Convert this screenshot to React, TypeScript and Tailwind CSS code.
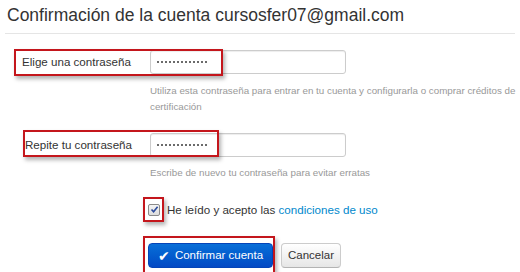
const dots = Array.from({ length: 13 })

function PasswordField() {
  return (
    <div className="flex h-[24px] w-[196px] items-center gap-[2px] rounded-[3px] border border-[#cccccc] bg-white pl-[6px] shadow-[inset_0_1px_1px_rgba(0,0,0,0.075)]">
      {dots.map((_, i) => (
        <span key={i} className="h-[2px] w-[2px] rounded-full bg-[#3a3a3a]" />
      ))}
    </div>
  )
}

// hand-drawn red highlight boxes that sit over the form
function Mark({ className }: { className: string }) {
  return (
    <div
      className={
        'pointer-events-none absolute border-2 border-[#c4161c] shadow-[2px_3px_4px_rgba(0,0,0,0.3)] ' +
        className
      }
    />
  )
}

export default function App() {
  return (
    <div className="relative h-[272px] w-[520px] overflow-hidden bg-white font-['Liberation_Sans',Arial,sans-serif] text-[#333]">
      <h1 className="pl-[7px] pt-[5px] text-[17.5px] font-normal leading-[20px] text-[#333]">
        Confirmación de la cuenta cursosfer07@gmail.com
      </h1>
      <div className="mx-[5px] mt-[8px] h-px bg-[#e5e5e5]" />

      {/* Password */}
      <div className="mt-[16px] flex items-center">
        <label className="w-[150px] pl-[22px] text-[11.6px] text-[#333]">Elige una contraseña</label>
        <PasswordField />
      </div>
      <p className="ml-[150px] mt-[9px] w-[368px] text-[9.8px] leading-[16px] text-[#999]">
        Utiliza esta contraseña para entrar en tu cuenta y configurarla o comprar créditos de certificación
      </p>

      {/* Repeat */}
      <div className="mt-[18px] flex items-center">
        <label className="w-[150px] pl-[25px] text-[11.6px] text-[#333]">Repite tu contraseña</label>
        <PasswordField />
      </div>
      <p className="ml-[150px] mt-[8px] text-[9.8px] leading-[16px] text-[#999]">
        Escribe de nuevo tu contraseña para evitar erratas
      </p>

      {/* Terms */}
      <div className="ml-[148px] mt-[20px] flex h-[17px] items-center gap-[7px] text-[11.6px]">
        <span className="flex h-[12px] w-[12px] items-center justify-center rounded-[2px] border border-[#8a8a8a] bg-gradient-to-b from-[#f4f4f4] to-[#dcdcdc]">
          <svg width="9" height="9" viewBox="0 0 9 9">
            <path d="M1.5 4.5 L3.6 6.8 L7.6 1.8" fill="none" stroke="#2b4a9c" strokeWidth="1.6" />
          </svg>
        </span>
        <span>
          He leído y acepto las <span className="text-[#0088cc]">condiciones de uso</span>
        </span>
      </div>

      {/* Actions */}
      <div className="ml-[148px] mt-[25px] flex gap-[8px]">
        <button
          type="button"
          className="flex h-[25px] w-[125px] items-center justify-center gap-[5px] rounded-[4px] border border-[#0544b8] bg-gradient-to-b from-[#0a6fd8] to-[#0449c4] text-[11.5px] text-white"
        >
          <span className="text-[14px] leading-none">✔</span>
          Confirmar cuenta
        </button>
        <button
          type="button"
          className="flex h-[25px] w-[60px] items-center justify-center rounded-[4px] border border-[#cccccc] border-b-[#b3b3b3] bg-gradient-to-b from-white to-[#e6e6e6] text-[11.5px] text-[#333]"
        >
          Cancelar
        </button>
      </div>

      <Mark className="left-[14px] top-[49px] h-[27px] w-[209px]" />
      <Mark className="left-[23px] top-[130px] h-[27px] w-[196px]" />
      <Mark className="left-[143px] top-[197px] h-[25px] w-[21px]" />
      <Mark className="left-[143px] top-[236px] h-[40px] w-[132px]" />
    </div>
  )
}
